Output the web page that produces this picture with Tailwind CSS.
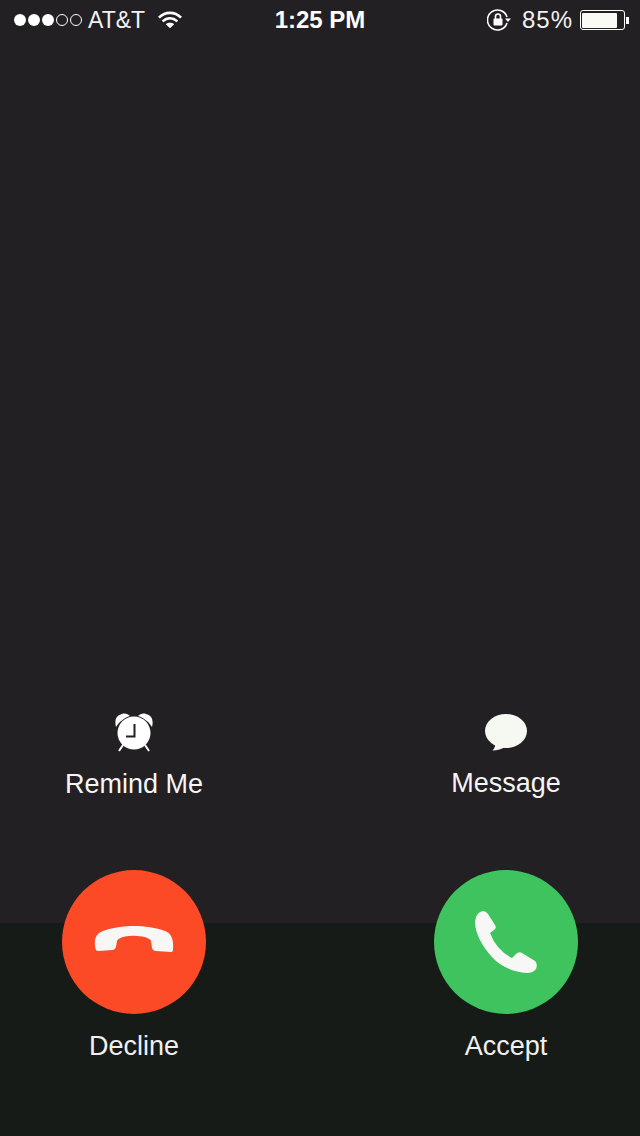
<!DOCTYPE html>
<html lang="en">
<head>
  <meta charset="UTF-8" />
  <meta name="viewport" content="width=device-width, initial-scale=1.0"/>
  <title>Incoming call</title>
  <script src="https://cdn.jsdelivr.net/npm/@tailwindcss/browser@4"></script>
</head>
<body class="bg-[#171b17] font-['Liberation_Sans',Arial,sans-serif] text-white">
  <div class="w-[640px] h-[1136px] overflow-hidden flex flex-col bg-[linear-gradient(#222023_923px,#171b17_923px)]">

    <!-- Status bar -->
    <header class="h-[40px] grid grid-cols-3 items-center text-[24px] leading-none">
      <div class="flex items-center pl-[14px]">
        <div class="flex gap-[2px]">
          <span class="w-[12px] h-[12px] rounded-full bg-white"></span>
          <span class="w-[12px] h-[12px] rounded-full bg-white"></span>
          <span class="w-[12px] h-[12px] rounded-full bg-white"></span>
          <span class="w-[12px] h-[12px] rounded-full border border-white"></span>
          <span class="w-[12px] h-[12px] rounded-full border border-white"></span>
        </div>
        <span class="ml-[6px] text-[23px] text-[#f2f2f2]">AT&amp;T</span>
        <svg class="ml-[13px]" width="24" height="18" viewBox="0 0 26 18" fill="none" stroke="#fff" stroke-width="2.8">
          <path d="M1 6.500 C8 -0.500 18 -0.500 25 6.500"/>
          <path d="M5 10.500 C10 6 16 6 21 10.500"/>
          <path d="M13 18 L8.500 13.500 C11 11.500 15 11.500 17.500 13.500 Z" fill="#fff" stroke="none"/>
        </svg>
      </div>
      <div class="text-center font-bold text-[24px]">1:25 PM</div>
      <div class="flex items-center justify-end pr-[11px]">
        <svg width="24" height="22" viewBox="0 0 24 22" fill="none" stroke="#fff" stroke-width="1.6">
          <path d="M20 8 A10 10 0 1 0 20 14"/>
          <path d="M18 9.500 H24 L21 13 Z" fill="#fff" stroke="none"/>
          <rect x="6.500" y="9.500" width="9" height="7" rx="1" fill="#fff" stroke="none"/>
          <path d="M8.500 10 V7.500 A2.500 2.500 0 0 1 13.500 7.500 V10"/>
        </svg>
        <span class="ml-[11px] tracking-[1px] text-[#f2f2f2]">85%</span>
        <div class="ml-[7px] flex items-center">
          <div class="w-[45px] h-[20px] rounded-[3px] border-[1.5px] border-white p-[1.5px]">
            <div class="w-[35px] h-full rounded-[1px] bg-[#fbfbf6]"></div>
          </div>
          <span class="ml-[1px] w-[3px] h-[7px] bg-white"></span>
        </div>
      </div>
    </header>

    <main class="flex-1 flex flex-col justify-end">
      <!-- Secondary actions -->
      <section class="flex justify-between px-[62px]">
        <div class="w-[144px] flex flex-col items-center">
          <svg width="38" height="39" viewBox="0 0 38 39" fill="#fff">
            <path d="M1 14 C-1 6 2 2 7 1 C10 0 13 1 15 3 C9 5 4 9 1 14 Z"/>
            <path d="M37 14 C39 6 36 2 31 1 C28 0 25 1 23 3 C29 5 34 9 37 14 Z"/>
            <circle cx="19" cy="20" r="16.500"/>
            <path d="M8 32 L4 38 M30 32 L34 38" stroke="#fff" stroke-width="2" fill="none"/>
            <path d="M19.500 11 V23.500 H11" stroke="#222023" stroke-width="2" fill="none"/>
          </svg>
          <span class="mt-[17px] text-[27px] leading-[30px] text-[#f5f5f5]">Remind Me</span>
        </div>
        <div class="w-[144px] flex flex-col items-center">
          <svg class="mt-[1px]" width="42" height="37" viewBox="0 0 42 37" fill="#f6f8f2">
            <ellipse cx="21" cy="17" rx="21" ry="17"/>
            <path d="M10 27 C11 31 10 34 7.500 36.500 C12 36.500 17 35.500 21 32 Z"/>
          </svg>
          <span class="mt-[17px] text-[27px] leading-[30px] text-[#f5f5f5]">Message</span>
        </div>
      </section>

      <!-- Decline / Accept -->
      <section class="mt-[71px] mb-[75px] flex justify-between px-[62px]">
        <div class="w-[144px] flex flex-col items-center">
          <div class="w-[144px] h-[144px] rounded-full bg-[#fc4a26] flex items-center justify-center">
            <svg class="mb-[6px]" width="80" height="27" viewBox="0 0 80 27" fill="#f7f8f6">
              <path d="M1 20 C0 12 3 7 9 5 C18 1.500 30 0 40 0 C50 0 62 1.500 71 5 C77 7 80 13 79 24 Q79 26 77 26 L62 25 Q59 25 58 22 L57 15 Q56 12 48 10.500 C42 9.500 36 9.500 31 10.500 Q24 12 23 15 L22 21 Q21 24 18 24 L4 25 Q1.500 25 1 20 Z"/>
            </svg>
          </div>
          <span class="mt-[17px] text-[27px] leading-[30px] text-[#f0f0f0]">Decline</span>
        </div>
        <div class="w-[144px] flex flex-col items-center">
          <div class="w-[144px] h-[144px] rounded-full bg-[#3fc35f] flex items-center justify-center">
            <svg width="62" height="62" viewBox="0 0 62 62" fill="#f7f8f6">
              <path d="M1 6 Q3 1 8 0 Q11 0 13 3 L20 14 Q22 17 19 19 L15 22 Q18 30 23 36 Q29 43 37 47 L41 43 Q44 40 47 42 L60 50 Q63 53 61 58 Q58 62 52 62 C38 61 26 56 17 46 C7 35 0 22 0 11 Z"/>
            </svg>
          </div>
          <span class="mt-[17px] text-[27px] leading-[30px] text-[#f0f0f0]">Accept</span>
        </div>
      </section>
    </main>
  </div>
</body>
</html>
